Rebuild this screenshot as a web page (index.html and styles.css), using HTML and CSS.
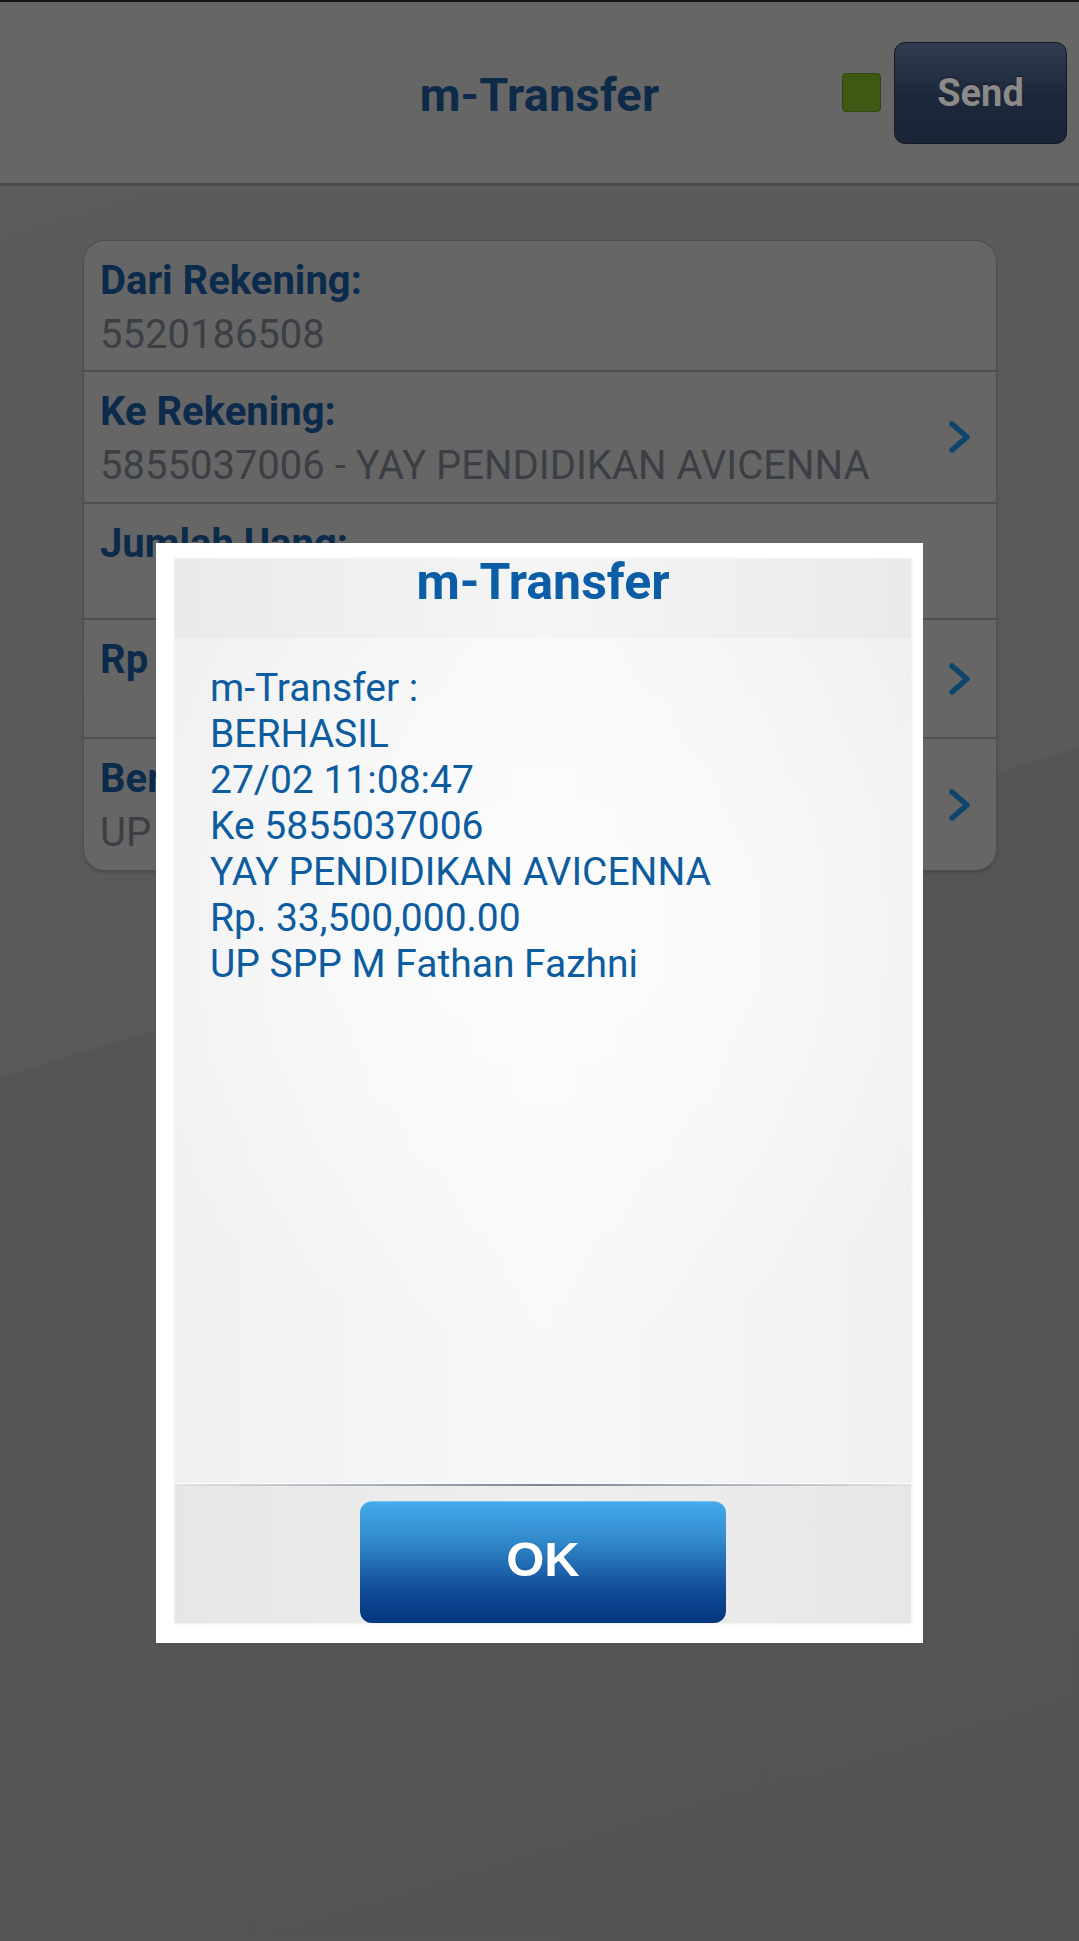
FILE: index.html
```html
<!DOCTYPE html>
<html lang="id">
<head>
<meta charset="utf-8">
<title>m-Transfer</title>
<link rel="stylesheet" href="styles.css">
</head>
<body>
<div class="screen">
  <header class="topbar">
    <div class="topbar-side"></div>
    <h1 class="topbar-title">m-Transfer</h1>
    <div class="topbar-actions">
      <span class="status-led"></span>
      <button class="send-btn">Send</button>
    </div>
  </header>

  <main class="content">
    <section class="card">
      <div class="row">
        <div class="row-text">
          <div class="row-label">Dari Rekening:</div>
          <div class="row-value">5520186508</div>
        </div>
      </div>
      <div class="row">
        <div class="row-text">
          <div class="row-label">Ke Rekening:</div>
          <div class="row-value">5855037006 - YAY PENDIDIKAN AVICENNA</div>
        </div>
        <svg class="chev" viewBox="0 0 24 34"><polyline points="4,4 19,17 4,30"/></svg>
      </div>
      <div class="row row-short">
        <div class="row-text">
          <div class="row-label">Jumlah Uang:</div>
        </div>
      </div>
      <div class="row row-short2">
        <div class="row-text">
          <div class="row-label">Rp</div>
        </div>
        <svg class="chev" viewBox="0 0 24 34"><polyline points="4,4 19,17 4,30"/></svg>
      </div>
      <div class="row row-last">
        <div class="row-text">
          <div class="row-label">Berita:</div>
          <div class="row-value">UP SPP M Fathan Fazhni</div>
        </div>
        <svg class="chev" viewBox="0 0 24 34"><polyline points="4,4 19,17 4,30"/></svg>
      </div>
    </section>
  </main>

  <div class="dialog">
    <div class="dialog-panel">
      <div class="dialog-title">m-Transfer</div>
      <div class="dialog-body">
        <p class="msg">m-Transfer :</p>
        <p class="msg">BERHASIL</p>
        <p class="msg">27/02 11:08:47</p>
        <p class="msg">Ke 5855037006</p>
        <p class="msg">YAY PENDIDIKAN AVICENNA</p>
        <p class="msg">Rp. 33,500,000.00</p>
        <p class="msg">UP SPP M Fathan Fazhni</p>
      </div>
      <div class="dialog-sep"></div>
      <div class="dialog-footer">
        <button class="ok-btn">OK</button>
      </div>
    </div>
  </div>
</div>
</body>
</html>
```

FILE: styles.css
```css
* { box-sizing: border-box; }

html, body {
  margin: 0;
  padding: 0;
}

body {
  width: 1079px;
  height: 1941px;
  background: #555555;
  font-family: Roboto, "Noto Sans", "Liberation Sans", sans-serif;
  overflow: hidden;
}

.screen {
  position: relative;
  width: 1079px;
  height: 1941px;
  display: flex;
  flex-direction: column;
}

/* ---------- top bar ---------- */
.topbar {
  height: 186px;
  flex: none;
  border-top: 2px solid #151515;
  border-bottom: 3px solid #4b4b4b;
  background: #666666;
  display: grid;
  grid-template-columns: 1fr auto 1fr;
  align-items: center;
}

.topbar-title {
  margin: 0;
  font-size: 47px;
  font-weight: 700;
  color: #0d2a49;
  letter-spacing: 0.2px;
  line-height: 1;
  padding-top: 4px;
}

.topbar-actions {
  display: flex;
  align-items: center;
  justify-content: flex-end;
  gap: 13px;
  padding-right: 12px;
}

.status-led {
  width: 39px;
  height: 39px;
  border-radius: 4px;
  background: #3e5913;
  border: 1px solid #31470f;
}

.send-btn {
  width: 173px;
  height: 102px;
  border-radius: 11px;
  border: 1px solid #131a24;
  background: linear-gradient(#2f3c51, #1c283a 55%, #1a2537);
  color: #8a8a8a;
  font-family: Roboto, "Liberation Sans", sans-serif;
  font-weight: 700;
  font-size: 38px;
  text-shadow: 0 -1px 1px #1a1a1a;
  padding: 0;
}

/* ---------- content ---------- */
.content {
  flex: 1;
  background: linear-gradient(163deg, #5b5b5b 0%, #5a5a5a 42.6%, #555555 42.9%, #545454 100%);
  padding: 54px 82px 0 83px;
}

.card {
  width: 914px;
  background: #666666;
  border: 1px solid #4e4e4e;
  border-radius: 22px;
  overflow: hidden;
  box-shadow: 0 2px 3px rgba(0,0,0,0.15);
}

.row {
  display: flex;
  align-items: center;
  min-height: 132px;
  padding: 0 24px 0 16px;
  border-bottom: 2px solid #4f4f4f;
}
.row:first-child { min-height: 131px; }
.row-short { min-height: 116px; }
.row-short2 { min-height: 119px; }
.row-last { border-bottom: none; min-height: 131px; }

.row-text {
  flex: 1;
  align-self: flex-start;
  padding-top: 17px;
}

.row-label {
  font-size: 40px;
  font-weight: 700;
  color: #0c2b4c;
  line-height: 46px;
}

.row-value {
  margin-top: 8px;
  font-size: 40px;
  color: #3b3f45;
  line-height: 46px;
  white-space: nowrap;
}

.chev {
  width: 24px;
  height: 34px;
  flex: none;
}
.chev polyline {
  fill: none;
  stroke: #0d466a;
  stroke-width: 5.5;
  stroke-linecap: round;
  stroke-linejoin: round;
}

/* ---------- dialog ---------- */
.dialog {
  position: absolute;
  left: 156px;
  top: 543px;
  width: 767px;
  height: 1100px;
  background: #ffffff;
  padding: 16px 12px 20px 19px;
}

.dialog-panel {
  width: 100%;
  height: 100%;
  display: flex;
  flex-direction: column;
  background: #f2f2f2;
  box-shadow: 0 0 3px rgba(0,0,0,0.12);
}

.dialog-title {
  height: 79px;
  flex: none;
  text-align: center;
  font-size: 50px;
  font-weight: 700;
  color: #0b5ea5;
  line-height: 46px;
  background: linear-gradient(90deg, #eaeaea, #f5f5f5 50%, #eaeaea);
}

.dialog-body {
  flex: 1;
  padding: 27px 20px 0 35px;
  background:
    radial-gradient(ellipse 65% 50% at 50% 35%, #fcfcfd 0%, rgba(252,252,253,0) 100%),
    linear-gradient(90deg, #f0f0f0, #f7f8f9 50%, #f0f0f0);
}

.msg {
  margin: 0;
  font-size: 39px;
  line-height: 46px;
  color: #0c5c9f;
}

.dialog-sep {
  height: 3px;
  flex: none;
  border-top: 1px solid #ffffff;
  background: linear-gradient(90deg, #dfe2e6, #7a8493 50%, #dfe2e6);
}

.dialog-footer {
  height: 137px;
  flex: none;
  display: flex;
  justify-content: center;
  align-items: flex-end;
  background: linear-gradient(90deg, #e6e6e6, #efefef 50%, #e6e6e6);
}

.ok-btn {
  width: 366px;
  height: 122px;
  border: none;
  border-top: 1px solid #7cc4f0;
  border-radius: 12px;
  background: linear-gradient(#44aaea, #2f86c8 35%, #124f9a 70%, #04357f);
  color: #ffffff;
  font-family: "Liberation Sans", Arial, sans-serif;
  font-weight: 700;
  font-size: 49px;
  padding: 0 0 8px 0;
  text-shadow: 0 0 2px rgba(0,0,0,0.15);
}
```
